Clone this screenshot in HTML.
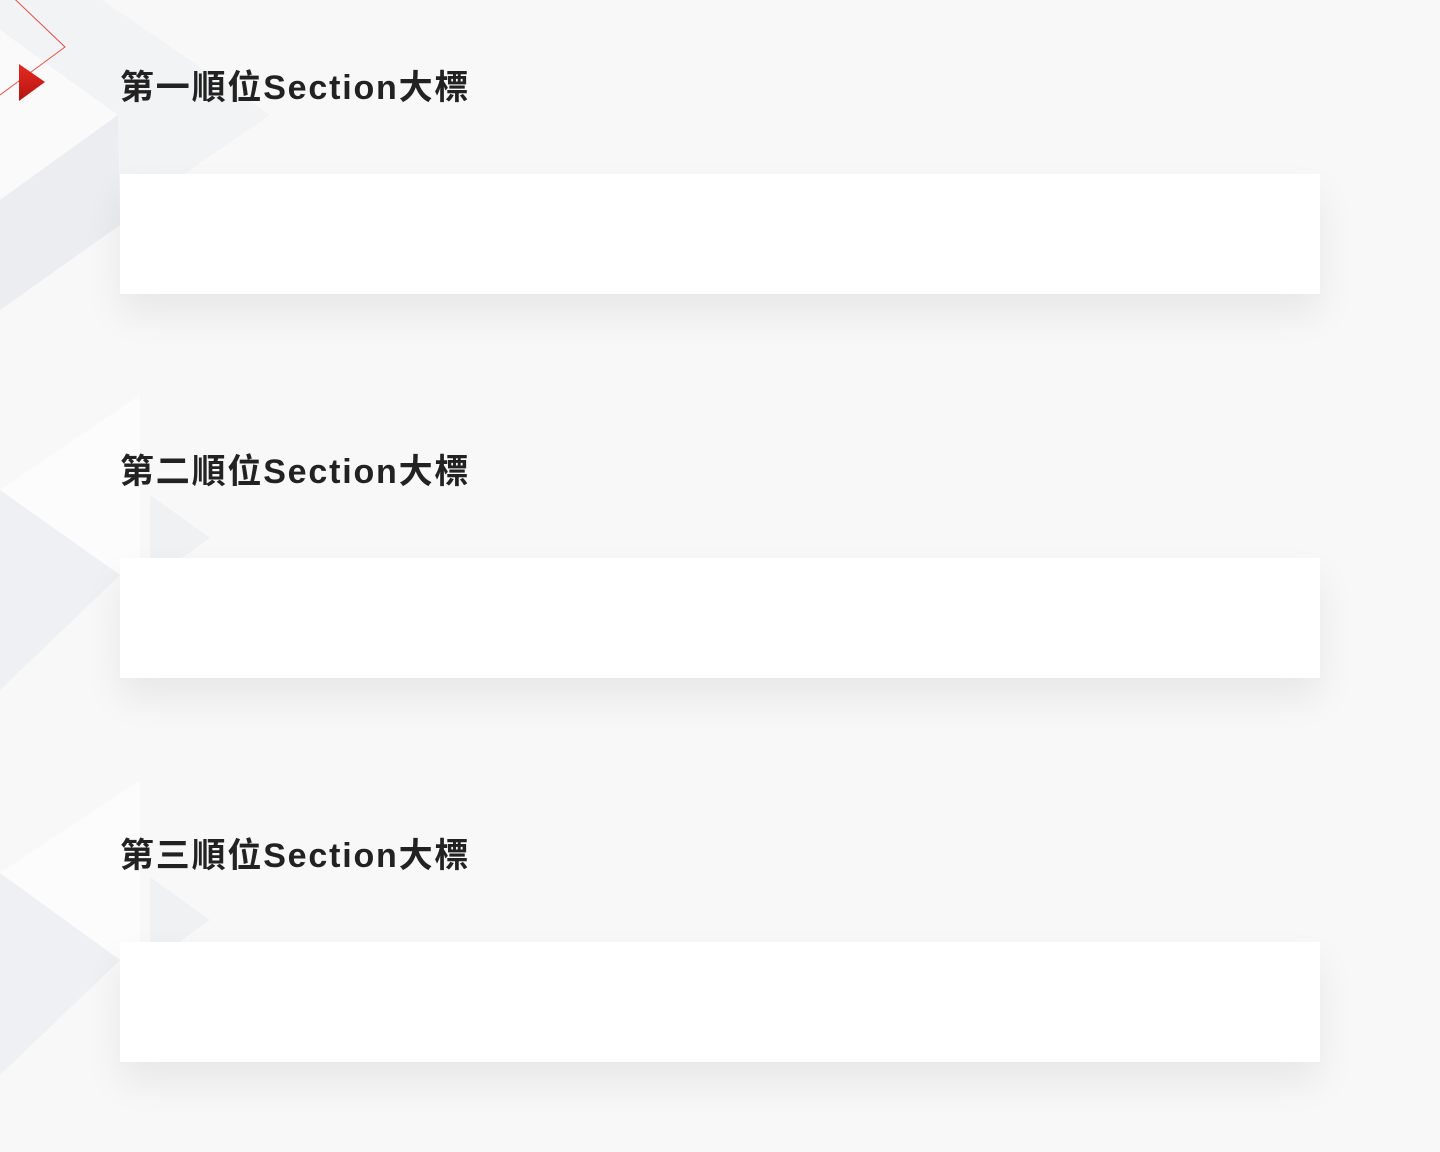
<!DOCTYPE html>
<html><head><meta charset="utf-8"><style>
html,body{margin:0;padding:0}
body{width:1440px;height:1152px;background:#f8f8f8;position:relative;overflow:hidden;font-family:"Liberation Sans","Noto Sans CJK TC",sans-serif}
svg.bg{position:absolute;left:0;top:0}
h2{position:absolute;left:120px;margin:0;font-size:34px;font-weight:bold;color:#222;line-height:40px;letter-spacing:1.8px}
.card{position:absolute;left:120px;width:1200px;height:120px;background:#fff;box-shadow:0 20px 40px rgba(0,0,0,0.07)}
</style></head><body>
<svg class="bg" width="1440" height="1152" viewBox="0 0 1440 1152">
<defs>
<linearGradient id="r" x1="0" y1="0" x2="0" y2="1"><stop offset="0" stop-color="#e52a22"/><stop offset="1" stop-color="#b51510"/></linearGradient>
</defs>
<polygon points="0,-70 270,115 0,300" fill="#f2f3f5"/>
<polygon points="0,30 118,115 0,200" fill="#fafafa"/>
<polygon points="0,200 118,115 120,225 0,310" fill="#ebedf0"/>
<polyline points="0,-15 65,47 0,95" fill="none" stroke="#e0514a" stroke-width="1"/>
<polygon points="19,64 45,82 19,101" fill="url(#r)"/>
<polygon points="0,490 140,395 140,600 120,575" fill="#fcfcfc"/>
<polygon points="0,490 120,575 0,690" fill="#eef0f3"/>
<polygon points="150,495 210,538 150,580" fill="#f0f1f3"/>
<polygon points="0,873 140,780 140,985 120,960" fill="#fcfcfc"/>
<polygon points="0,873 120,960 0,1075" fill="#eef0f3"/>
<polygon points="150,877 210,920 150,963" fill="#f0f1f3"/>
</svg>
<h2 style="top:68px">第一順位Section大標</h2>
<div class="card" style="top:174px"></div>
<h2 style="top:452px">第二順位Section大標</h2>
<div class="card" style="top:558px"></div>
<h2 style="top:836px">第三順位Section大標</h2>
<div class="card" style="top:942px"></div>
</body></html>
